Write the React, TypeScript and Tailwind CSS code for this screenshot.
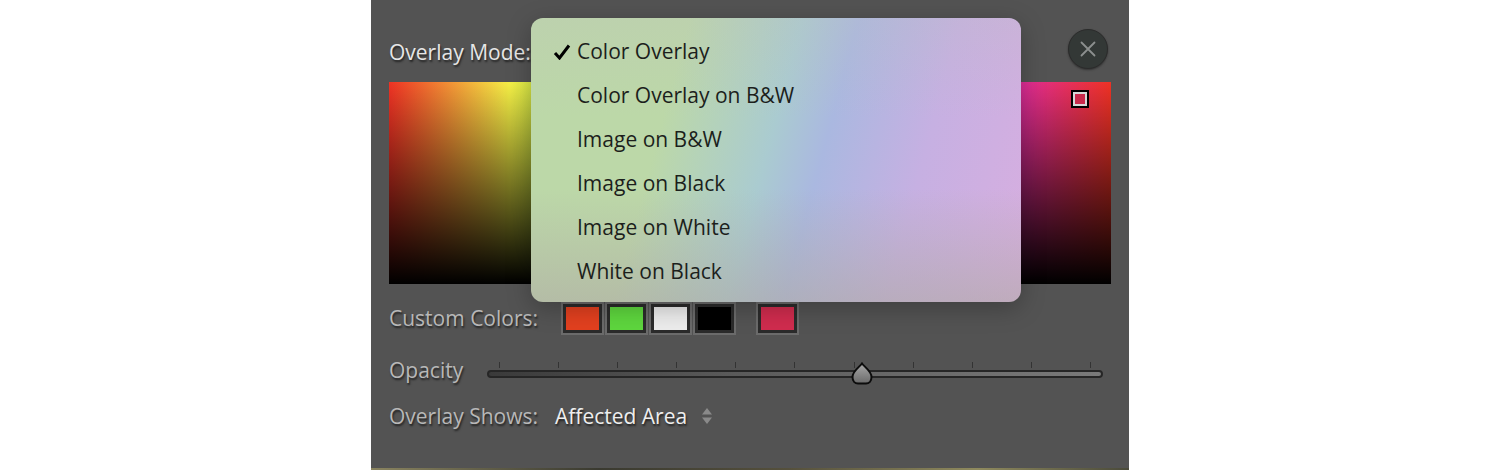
const font = "[font-family:'Open_Sans',sans-serif]";

const menuItems = [
    'Color Overlay',
    'Color Overlay on B&W',
    'Image on B&W',
    'Image on Black',
    'Image on White',
    'White on Black',
];

const ticks = [0, 1, 2, 3, 4, 5, 6, 7, 8, 9, 10];

const Swatch = ({ color }: { color: string }) => (
    <div className="w-[43px] h-[33px] border-2 border-[#6b6b6b] bg-[#2b2b2b] p-[3px]">
        <div className={`w-full h-full ${color}`}></div>
    </div>
);

const App = () => {
    return (
        <div className={`w-[1500px] h-[470px] bg-white flex justify-center ${font}`}>
            <div className="relative w-[758px] h-[470px] flex flex-col bg-[#535353] ml-[-0px]">
                <div className="h-[82px] px-[18px] flex items-center justify-between">
                    <span className="text-[21px] leading-[28px] mt-[22px] text-[#e6e6e6] [text-shadow:1px_2px_2px_#222]">Overlay Mode:</span>
                    <button className="w-[40px] h-[40px] mt-[16px] mr-[3px] rounded-full bg-[#333836] border border-[#2b2b2b] flex items-center justify-center shadow-[0_1px_2px_#333]">
                        <svg width="18" height="18" viewBox="0 0 18 18" stroke="#8c8f8e" strokeWidth="1.8" strokeLinecap="round">
                            <path d="M2.5 2.5 L15.5 15.5 M15.5 2.5 L2.5 15.5" />
                        </svg>
                    </button>
                </div>

                <div className="mx-[18px] h-[202px] relative bg-[linear-gradient(to_bottom,transparent,#000),linear-gradient(to_right,#ef3224,#f5f046_16.7%,#6fd84a_33%,#40d8c8_50%,#4058d8_67%,#e02d96_88%,#ef3224)]">
                    <div className="absolute top-[8px] right-[22px] w-[18px] h-[18px] border-2 border-black bg-[#d8d8d8] p-[2px]">
                        <div className="w-full h-full bg-[#c92a4c]"></div>
                    </div>
                </div>

                <div className="h-[49px] mt-[18px] pl-[18px] flex items-start">
                    <span className="w-[172px] text-[21px] leading-[28px] mt-[2px] text-[#b8b8b8] [text-shadow:1px_2px_2px_#222]">Custom Colors:</span>
                    <div className="flex gap-[1px]">
                        <Swatch color="bg-[#e2401f]" />
                        <Swatch color="bg-[#5ed63e]" />
                        <Swatch color="bg-[#ececec]" />
                        <Swatch color="bg-black" />
                    </div>
                    <div className="ml-[20px]">
                        <Swatch color="bg-[#d02c4e]" />
                    </div>
                </div>

                <div className="h-[52px] pl-[18px] flex items-start">
                    <span className="w-[98px] text-[21px] leading-[28px] mt-[5px] text-[#b8b8b8] [text-shadow:1px_2px_2px_#222]">Opacity</span>
                    <div className="relative w-[616px]">
                        <div className="flex justify-between px-[12px] pt-[11px] h-[19px]">
                            {ticks.map((t) => (
                                <div key={t} className="w-[1px] h-[6px] bg-[#333]"></div>
                            ))}
                        </div>
                        <div className="h-[8px] rounded-full border-2 border-[#262626] bg-[linear-gradient(to_right,#3a3a3a,#5a5a5a_40%,#7a7a7a)]"></div>
                        <svg className="absolute left-[364px] top-[11px]" width="22" height="23" viewBox="0 0 22 23">
                            <defs>
                                <linearGradient id="thumb" x1="0" y1="0" x2="0" y2="1">
                                    <stop offset="0" stopColor="#a8a8a8" />
                                    <stop offset="1" stopColor="#6a6a6a" />
                                </linearGradient>
                            </defs>
                            <path d="M11 1.5 C13 4.5 20.5 9 20.5 15 C20.5 19 18 21.5 15 21.5 L7 21.5 C4 21.5 1.5 19 1.5 15 C1.5 9 9 4.5 11 1.5 Z" fill="url(#thumb)" stroke="#0c0c0c" strokeWidth="2" />
                        </svg>
                    </div>
                </div>

                <div className="pl-[18px] flex items-center h-[28px] mt-[-1px]">
                    <span className="w-[166px] text-[21px] leading-[28px] text-[#b8b8b8] [text-shadow:1px_2px_2px_#222]">Overlay Shows:</span>
                    <span className="text-[21px] leading-[28px] text-[#eeeeee] [text-shadow:1px_2px_2px_#222]">Affected Area</span>
                    <svg className="ml-[14px]" width="12" height="18" viewBox="0 0 12 18" fill="#8a8a8a">
                        <path d="M6 1 L11 7.5 L1 7.5 Z M1 10.5 L11 10.5 L6 17 Z" />
                    </svg>
                </div>

                <div className="mt-auto h-[2px] bg-[linear-gradient(to_right,#8a8460,#3a3a30_30%,#55503c_55%,#8f8a5e_80%,#4a4a3a)]"></div>

                <div className="absolute left-[160px] top-[18px] w-[490px] h-[284px] rounded-[12px] pt-[12px] shadow-[0_6px_24px_rgba(0,0,0,0.25)] bg-[linear-gradient(to_bottom,rgba(190,190,190,0.25),rgba(190,190,190,0)_35%,rgba(175,170,165,0)_60%,rgba(175,170,165,0.6)),linear-gradient(105deg,#bcd8a8,#bcd8a8_28%,#aacbd0_48%,#aab8e0_58%,#c6b0e2_76%,#d8aee0)]">
                    {menuItems.map((item, i) => (
                        <div key={item} className="h-[44px] flex items-center text-[21px] text-[#1c1f1c]">
                            <span className="w-[46px] flex justify-end pr-[6px]">
                                {i === 0 && (
                                    <svg width="18" height="16" viewBox="0 0 18 16" fill="none" stroke="#000" strokeWidth="3">
                                        <path d="M2 9 L6.5 14 L16 1.5" />
                                    </svg>
                                )}
                            </span>
                            <span>{item}</span>
                        </div>
                    ))}
                </div>
            </div>
        </div>
    )
}

export default App
